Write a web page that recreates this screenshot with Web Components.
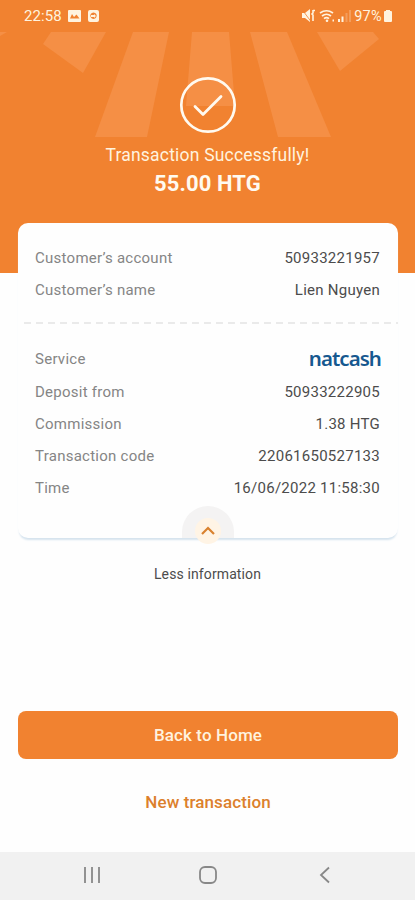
<!DOCTYPE html>
<html lang="en">
<head>
<meta charset="utf-8">
<title>Transaction</title>
<style>
  html, body {
    margin: 0;
    height: 100%;
    background: #fefefe;
    font-family: Roboto, "Liberation Sans", sans-serif;
  }
</style>
</head>
<body>
<transaction-screen></transaction-screen>

<script>
class BaseElement extends HTMLElement {
  constructor() {
    super();
    this._root = this.attachShadow({mode: 'open'});
  }

  connectedCallback() {
    this._root.innerHTML = this.template();
  }
}

class StatusBar extends BaseElement {
  template() {
    return `
      <style>
      :host {
          display: flex;
          align-items: center;
          height: 32px;
          padding: 0 22px 0 24px;
          color: #fff3df;
          font-size: 15px;
      }

      svg { display: block; fill: currentColor; }
      .time { letter-spacing: 0.1px; margin-right: 6px; }
      .right { display: flex; align-items: center; margin-left: auto; }
      .battery { margin: 0 1px 0 2px; font-size: 14.5px; letter-spacing: 0.3px; }
      </style>
      <span class="time">22:58</span>
      <svg width="32" height="14" viewBox="0 0 32 14">
        <path fill-rule="evenodd" d="M1 1h11q1 0 1 1v10q0 1-1 1H1q-1 0-1-1V2q0-1 1-1zM2 9.500h9.500L8.500 5.500 6 8 4 5z"/>
        <path fill-rule="evenodd" d="M22 1h7q2 0 2 2v8q0 2-2 2h-7q-2 0-2-2V3q0-2 2-2zM25.500 3.500a3.200 3.200 0 1 0 .01 0zM23 6h3v-1l2 2-2 2v-1h-3z"/>
      </svg>
      <div class="right">
        <svg width="50" height="16" viewBox="0 0 50 16">
          <path d="M0 5h3l5-4v13L3 10H0z"/>
          <path d="M0 1.500l9 12" fill="none" stroke="#f18230" stroke-width=".8"/>
          <path d="M11 2v3l-1 1 1 1v6M11 2.500h2" fill="none" stroke="currentColor" stroke-width="1.600"/>
          <path d="M18 5q6.500-4.500 13 0M20 8q4.500-3.500 9 0M22 10.700q2.500-2 5 0" fill="none" stroke="currentColor" stroke-width="1.700"/>
          <circle cx="25" cy="12.800" r="1.300"/>
          <path d="M30.500 11.500h1.500v2h-1.500zM36 11h2v3h-2zM39.500 8.500h2v5.500h-2z"/>
          <path d="M43.500 5h2v9h-2zM47 2h2v12h-2z" opacity=".25"/>
        </svg>
        <span class="battery">97%</span>
        <svg width="10" height="14" viewBox="0 0 10 14">
          <path d="M3 1h4v1h1q1 0 1 1v9q0 1-1 1H2q-1 0-1-1V3q0-1 1-1h1z"/>
        </svg>
      </div>
    `;
  }
}

class SuccessHeader extends BaseElement {
  template() {
    return `
      <style>
      :host {
          display: grid;
          height: 191px;
          color: #fff3df;
          text-align: center;
      }

      .rays, .content { grid-area: 1 / 1; }
      svg { display: block; }

      .content {
          display: flex;
          flex-direction: column;
          align-items: center;
          padding-top: 44px;
      }

      .title {
          margin-top: 10px;
          font-size: 17.5px;
          line-height: 22px;
          letter-spacing: 0.2px;
      }

      .amount { margin-top: 5px; font-size: 22px; line-height: 26px; font-weight: 700; letter-spacing: 0.1px; color: #fffaf0; }
      </style>
      <svg class="rays" width="415" height="120" viewBox="0 32 415 120" fill="#f58f45">
        <path d="M0 32H7L0 36z"/>
        <path d="M51 32h55L83 73 43 44z"/>
        <path d="M133 32h36L147 137H95z"/>
        <path d="M192 32h37l6 74h-49z"/>
        <path d="M250 32h37l44 105h-53z"/>
        <path d="M317 32h56l6 7-39 32z"/>
      </svg>
      <div class="content">
        <svg width="58" height="58" viewBox="0 0 58 58" fill="none" stroke="#fffaf0">
          <circle cx="29" cy="29" r="26.700" stroke-width="2.700"/>
          <path d="M16 30.500L24 38.500 42 20.500" stroke-width="2.800" stroke-linecap="round" stroke-linejoin="round"/>
        </svg>
        <div class="title"><slot name="title"></slot></div>
        <div class="amount"><slot name="amount"></slot></div>
      </div>
    `;
  }
}

class InfoRow extends BaseElement {
  template() {
    return `
      <style>
      :host {
          display: flex;
          justify-content: space-between;
          align-items: center;
          height: 32.3px;
          font-size: 15px;
          letter-spacing: 0.26px;
          color: #4c4c4c;
      }

      .label { color: #858585; }
      </style>
      <span class="label">${this.getAttribute('label')}</span>
      <slot></slot>
    `;
  }
}

class NatcashLogo extends BaseElement {
  template() {
    return `
      <style>
      :host {
          display: block;
          margin: -3px -1px 0 0;
          font: 600 20.5px/24px "Noto Sans", sans-serif;
          letter-spacing: -0.95px;
          color: #16588f;
      }
      </style>
      <span>natcash</span>
    `;
  }
}

class ReceiptCard extends BaseElement {
  template() {
    return `
      <style>
      :host {
          display: block;
          padding: 0 17px 0 18px;
          background: linear-gradient(#f18230 50px, transparent 50px);
      }

      .card {
          display: flex;
          flex-direction: column;
          box-sizing: border-box;
          height: 315px;
          padding: 18.5px 18px 0 17px;
          border-radius: 10px;
          background: #fefefe;
          box-shadow: 0 3px 2px -1px #d5e3ee;
      }

      .divider { display: block; margin: 16px -18px 19px -11px; }

      .toggle {
          display: block;
          margin: auto auto -6px;
      }
      </style>
      <div class="card">
        <slot name="customer"></slot>
        <svg class="divider" width="374" height="2">
          <path d="M0 1H374" stroke="#e4e4e4" stroke-width="1.500" stroke-dasharray="7 5"/>
        </svg>
        <slot></slot>
        <svg class="toggle" width="52" height="38" viewBox="0 0 52 38">
          <path d="M0 32V26a26 26 0 0 1 52 0v6z" fill="#f4f3f3"/>
          <circle cx="26" cy="25" r="13" fill="#fff4e5"/>
          <path d="M20 28L26 22 32 28" fill="none" stroke="#d9822f" stroke-width="2.200"/>
        </svg>
      </div>
    `;
  }
}

class ActionButton extends BaseElement {
  template() {
    return `
      <style>
      :host {
          display: flex;
          justify-content: center;
          align-items: center;
          height: 48px;
          margin: 0 17px 0 18px;
          border-radius: 8px;
          font-size: 17px;
          font-weight: 500;
          letter-spacing: 0.1px;
          color: #dc802c;
      }

      :host([primary]) {
          background: #f18230;
          color: #fff3df;
      }
      </style>
      <slot></slot>
    `;
  }
}

class NavigationBar extends BaseElement {
  template() {
    return `
      <style>
      :host {
          display: flex;
          justify-content: space-between;
          align-items: center;
          box-sizing: border-box;
          height: 48px;
          padding: 0 79px 2px 80px;
          background: #f1f1f1;
      }

      svg { fill: none; stroke: #888; stroke-width: 1.8; }
      </style>
      <svg width="24" height="20"><path d="M5 2v16M12 2v16M19 2v16"/></svg>
      <svg width="24" height="20"><rect x="4" y="2" width="16" height="16" rx="5"/></svg>
      <svg width="24" height="20"><path d="M17 2.500L9 10 17 17.500"/></svg>
    `;
  }
}

class TransactionScreen extends BaseElement {
  template() {
    return `
      <style>
      :host {
          display: flex;
          flex-direction: column;
          height: 900px;
          overflow: hidden;
      }

      .top { background: #f18230; }

      .less {
          margin-top: 26px;
          font-size: 14px;
          line-height: 20px;
          letter-spacing: 0.12px;
          text-align: center;
          color: #4c4c4c;
      }

      .actions {
          display: flex;
          flex-direction: column;
          gap: 19px;
          margin-top: auto;
          padding-bottom: 26px;
      }
      </style>
      <div class="top">
        <status-bar></status-bar>
        <success-header>
          <span slot="title">Transaction Successfully!</span>
          <span slot="amount">55.00 HTG</span>
        </success-header>
      </div>
      <receipt-card>
        <info-row slot="customer" label="Customer’s account">50933221957</info-row>
        <info-row slot="customer" label="Customer’s name">Lien Nguyen</info-row>
        <info-row label="Service"><natcash-logo></natcash-logo></info-row>
        <info-row label="Deposit from">50933222905</info-row>
        <info-row label="Commission">1.38 HTG</info-row>
        <info-row label="Transaction code">22061650527133</info-row>
        <info-row label="Time">16/06/2022 11:58:30</info-row>
      </receipt-card>
      <div class="less">Less information</div>
      <div class="actions">
        <action-button primary>Back to Home</action-button>
        <action-button>New transaction</action-button>
      </div>
      <navigation-bar></navigation-bar>
    `;
  }
}

window.customElements.define("status-bar", StatusBar);
window.customElements.define("success-header", SuccessHeader);
window.customElements.define("info-row", InfoRow);
window.customElements.define("natcash-logo", NatcashLogo);
window.customElements.define("receipt-card", ReceiptCard);
window.customElements.define("action-button", ActionButton);
window.customElements.define("navigation-bar", NavigationBar);
window.customElements.define("transaction-screen", TransactionScreen);
</script>
</body>
</html>
